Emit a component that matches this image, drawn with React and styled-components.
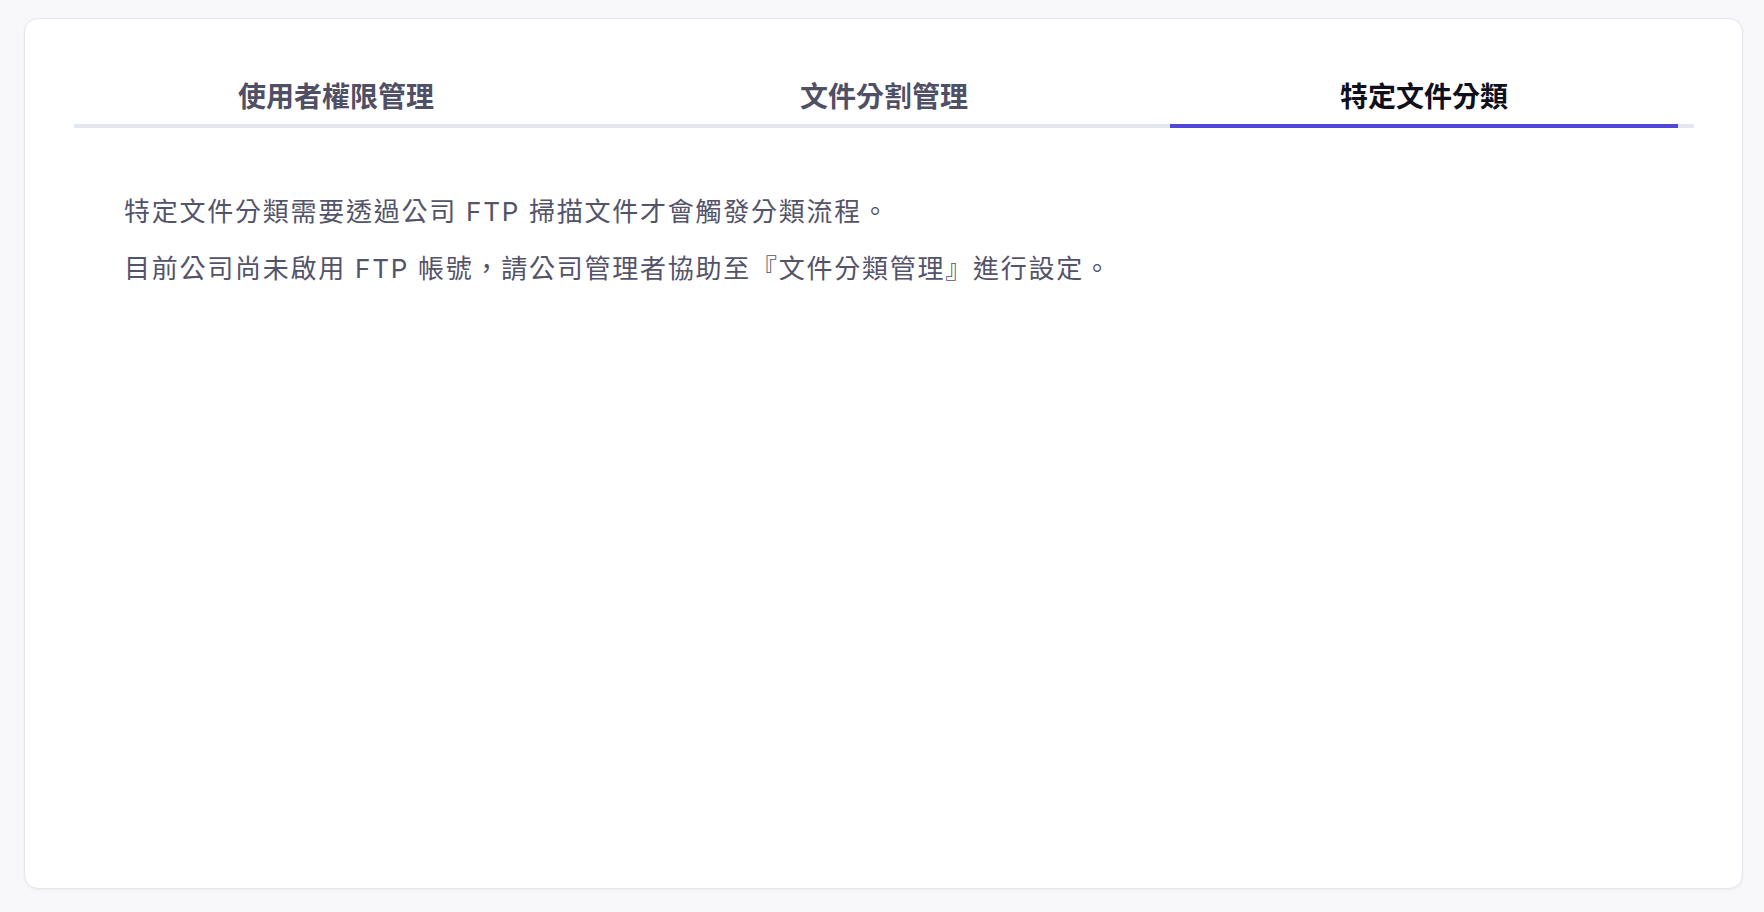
import React, { useState } from 'react';
import styled, { createGlobalStyle } from 'styled-components';

const GlobalStyle = createGlobalStyle`
  * { box-sizing: border-box; }
  html, body {
    margin: 0;
    padding: 0;
    background: #f8f8fb;
    font-family: "Inter", "Noto Sans CJK TC", "Noto Sans", sans-serif;
  }
`;

const Page = styled.div`
  min-height: 100vh;
  display: flex;
  padding: 18px 21px 23px 24px;
`;

const Card = styled.section`
  flex: 1;
  background: #ffffff;
  border: 1px solid #e5e6ee;
  border-radius: 14px;
  box-shadow: 0 1px 3px rgba(30, 30, 60, 0.05);
  padding: 58px 48px 0 49px;
`;

const TabList = styled.div`
  display: grid;
  grid-template-columns: 524fr 572fr 508fr;
  padding-right: 16px;
  border-bottom: 4px solid #e3e7ef;
`;

const Tab = styled.button`
  appearance: none;
  background: none;
  border: none;
  border-bottom: 4px solid ${(p) => (p.$active ? '#5046d8' : 'transparent')};
  margin-bottom: -4px;
  padding: 0 0 7px;
  font-family: "Inter", "Noto Sans CJK TC", sans-serif;
  font-size: 28px;
  line-height: 40px;
  font-weight: 700;
  color: ${(p) => (p.$active ? '#10101c' : '#4f4f66')};
  cursor: pointer;
`;

const Content = styled.div`
  padding: 66px 0 0 50px;
`;

const Paragraph = styled.p`
  margin: 0 0 21px;
  font-size: 26px;
  line-height: 36px;
  letter-spacing: 1.75px;
  color: #53536a;
`;

const tabs = ['使用者權限管理', '文件分割管理', '特定文件分類'];

export default function App() {
  const [active, setActive] = useState(2);

  return (
    <>
      <GlobalStyle />
      <Page>
        <Card>
          <TabList>
            {tabs.map((label, i) => (
              <Tab key={label} $active={i === active} onClick={() => setActive(i)}>
                {label}
              </Tab>
            ))}
          </TabList>
          {active === 2 && (
            <Content>
              <Paragraph>特定文件分類需要透過公司 FTP 掃描文件才會觸發分類流程。</Paragraph>
              <Paragraph>目前公司尚未啟用 FTP 帳號，請公司管理者協助至『文件分類管理』進行設定。</Paragraph>
            </Content>
          )}
        </Card>
      </Page>
    </>
  );
}
